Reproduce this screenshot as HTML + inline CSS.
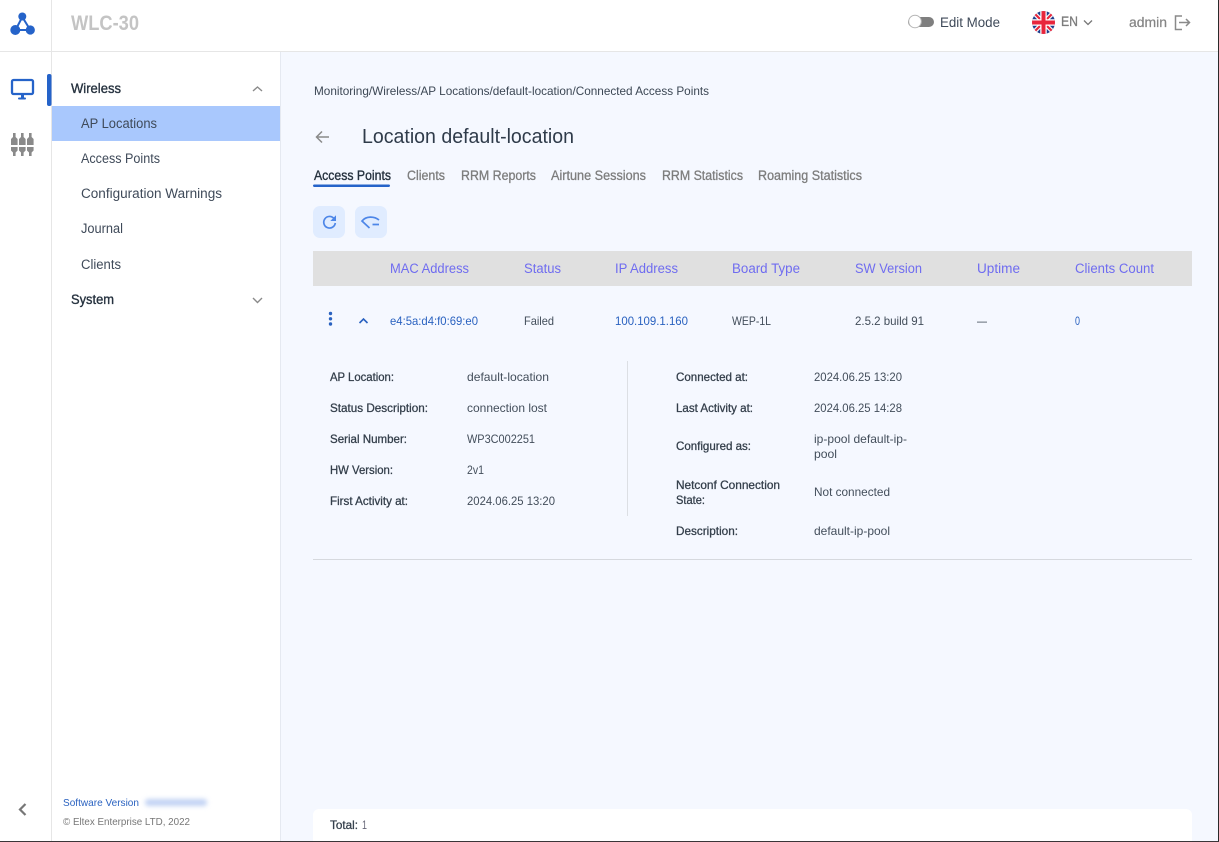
<!DOCTYPE html>
<html lang="en"><head><meta charset="utf-8"><title>WLC-30</title>
<style>
html,body{margin:0;padding:0;width:1219px;height:842px;overflow:hidden;background:#f5f8ff}
svg{display:block}
text{font-family:"Liberation Sans",sans-serif;white-space:pre}
.n{font-size:13.5px;fill:#3f4a59}
.b{font-size:13.5px;fill:#26323f;stroke:#26323f;stroke-width:.35}
.t{font-size:13.5px;fill:#7d7d7d;stroke:#7d7d7d;stroke-width:.3}
.h{font-size:13.5px;fill:#6f6cf0}
.c{font-size:12px;fill:#434e5b}
.l{font-size:12px;fill:#333e4a;stroke:#333e4a;stroke-width:.28}
.a{font-size:12px;fill:#2a62c0}
</style></head><body>
<svg width="1219" height="842" viewBox="0 0 1219 842" xmlns="http://www.w3.org/2000/svg">
<defs><filter id="bl" x="-20%" y="-100%" width="140%" height="300%"><feGaussianBlur stdDeviation="2.4"/></filter>
<clipPath id="fc"><circle cx="1043.5" cy="22.5" r="11.5"/></clipPath></defs>
<rect width="1219" height="842" fill="#f5f8ff"/>
<rect width="1219" height="51" fill="#fff"/>
<rect y="51" width="1219" height="1" fill="#e6e6e6"/>
<rect y="52" width="280" height="790" fill="#fff"/>
<rect x="51" width="1" height="842" fill="#e6e6e6"/>
<rect x="280" y="52" width="1" height="790" fill="#e5e9f1"/>

<!-- logo -->
<path d="M22.300 17 15.500 30H30.300Z" stroke="#2563c9" stroke-width="2" fill="none"/>
<circle cx="22.300" cy="16.500" r="4" fill="#2563c9"/><circle cx="15.300" cy="30" r="5" fill="#2563c9"/><circle cx="30.300" cy="30" r="4.600" fill="#2563c9"/>
<text x="71" y="30" style="font-size:21px;font-weight:700;fill:#c4c4c4" textLength="68" lengthAdjust="spacingAndGlyphs">WLC-30</text>

<!-- top right -->
<rect x="908" y="17" width="26" height="10" rx="5" fill="#7f7f7f"/>
<circle cx="915" cy="21.500" r="6.300" fill="#fff" stroke="#b5b5b5" stroke-width="1"/>
<text x="940" y="27" class="n" textLength="60" lengthAdjust="spacingAndGlyphs">Edit Mode</text>
<g clip-path="url(#fc)"><rect x="1032" y="11" width="23" height="23" fill="#1f3f8c"/>
<path d="M1032 11 1055 34M1055 11 1032 34" stroke="#fff" stroke-width="4.500"/>
<path d="M1032 11 1055 34M1055 11 1032 34" stroke="#e8263c" stroke-width="2.200"/>
<path d="M1043.500 11V34M1032 22.500H1055" stroke="#fff" stroke-width="6.500"/>
<path d="M1043.500 11V34M1032 22.500H1055" stroke="#e8263c" stroke-width="4"/></g>
<text x="1061" y="26" class="t" style="font-size:14px" textLength="17" lengthAdjust="spacingAndGlyphs">EN</text>
<path d="M1084 20.500 1088 24.500 1092 20.500" fill="none" stroke="#777" stroke-width="1.300"/>
<text x="1129" y="27" style="font-size:13.500px;fill:#858585;stroke:#858585;stroke-width:.2" textLength="38" lengthAdjust="spacingAndGlyphs">admin</text>
<path d="M1182 16H1175.500V29.500H1182M1179 22.500H1189.500M1186 19 1189.500 22.500 1186 26" fill="none" stroke="#8a8a8a" stroke-width="1.500"/>

<!-- rail -->
<rect x="12" y="80" width="21" height="14" rx="1.500" fill="none" stroke="#2563c9" stroke-width="2.300"/>
<rect x="21" y="95" width="3" height="3" fill="#2563c9"/>
<rect x="18" y="97.500" width="8" height="2" rx="1" fill="#2563c9"/>
<rect x="47" y="74" width="4.500" height="32" rx="2" fill="#2563c9"/>
<g fill="#8a8a8a">
<path d="M13 133h2.600v4l2 2v6h-6.600v-6l2-2zM11 147h6.600v3.500l-2 2v3.500h-2.600v-3.500l-2-2z"/>
<path d="M21 133h2.600v4l2 2v6h-6.600v-6l2-2zM19 147h6.600v3.500l-2 2v3.500h-2.600v-3.500l-2-2z"/>
<path d="M29 133h2.600v4l2 2v6h-6.600v-6l2-2zM27 147h6.600v3.500l-2 2v3.500h-2.600v-3.500l-2-2z"/>
</g>
<path d="M25.500 804 20 809.500 25.500 815" fill="none" stroke="#777" stroke-width="2.200"/>

<!-- nav -->
<text x="71" y="93" class="b" textLength="50" lengthAdjust="spacingAndGlyphs">Wireless</text>
<path d="M253 91 257.500 87 262 91" fill="none" stroke="#8a8a8a" stroke-width="1.400"/>
<rect x="52" y="106" width="228" height="35" fill="#a9c8fd"/>
<text x="81" y="128" class="n" textLength="76" lengthAdjust="spacingAndGlyphs">AP Locations</text>
<text x="81" y="163" class="n" textLength="79" lengthAdjust="spacingAndGlyphs">Access Points</text>
<text x="81" y="198" class="n" textLength="141" lengthAdjust="spacingAndGlyphs">Configuration Warnings</text>
<text x="81" y="233" class="n" textLength="42" lengthAdjust="spacingAndGlyphs">Journal</text>
<text x="81" y="269" class="n" textLength="40" lengthAdjust="spacingAndGlyphs">Clients</text>
<text x="71" y="304" class="b" textLength="43" lengthAdjust="spacingAndGlyphs">System</text>
<path d="M253 298 257.500 302.500 262 298" fill="none" stroke="#8a8a8a" stroke-width="1.400"/>
<text x="63" y="806" style="font-size:10.500px;fill:#2a62c0" textLength="76" lengthAdjust="spacingAndGlyphs">Software Version</text>
<rect x="145" y="799" width="62" height="7" rx="3" fill="#c2d3f4" filter="url(#bl)"/>
<text x="63" y="825" style="font-size:10px;fill:#777" textLength="127" lengthAdjust="spacingAndGlyphs">© Eltex Enterprise LTD, 2022</text>

<!-- main head -->
<text x="314" y="95" style="font-size:12px;fill:#3c4754" textLength="395" lengthAdjust="spacingAndGlyphs">Monitoring/Wireless/AP Locations/default-location/Connected Access Points</text>
<path d="M329 137H317M322 131.500 316.500 137 322 142.500" fill="none" stroke="#8a8a8a" stroke-width="1.500"/>
<text x="362" y="143" style="font-size:20px;fill:#2f3b4a" textLength="212" lengthAdjust="spacingAndGlyphs">Location default-location</text>
<text x="314" y="180" class="b" textLength="77" lengthAdjust="spacingAndGlyphs">Access Points</text>
<rect x="313" y="184.500" width="77" height="2.500" rx="1.200" fill="#2563c9"/>
<text x="407" y="180" class="t" textLength="38" lengthAdjust="spacingAndGlyphs">Clients</text>
<text x="461" y="180" class="t" textLength="75" lengthAdjust="spacingAndGlyphs">RRM Reports</text>
<text x="551" y="180" class="t" textLength="95" lengthAdjust="spacingAndGlyphs">Airtune Sessions</text>
<text x="662" y="180" class="t" textLength="81" lengthAdjust="spacingAndGlyphs">RRM Statistics</text>
<text x="758" y="180" class="t" textLength="104" lengthAdjust="spacingAndGlyphs">Roaming Statistics</text>

<!-- buttons -->
<rect x="313" y="206" width="32" height="32" rx="7" fill="#e0ecff"/>
<rect x="355" y="206" width="32" height="32" rx="7" fill="#e0ecff"/>
<path d="M334 218.500A5.800 5.800 0 1 0 335.300 223" fill="none" stroke="#4d86e8" stroke-width="1.700"/>
<path d="M331.500 220.500H335.500V216.500Z" fill="#4d86e8" stroke="#4d86e8"/>
<path d="M379 220C374 216 366 216 362 221L369.500 228M372.500 224.500H379" fill="none" stroke="#4d86e8" stroke-width="1.700"/>

<!-- table -->
<rect x="313" y="251" width="879" height="35" fill="#e0e0e0"/>
<text x="390" y="273" class="h" textLength="79" lengthAdjust="spacingAndGlyphs">MAC Address</text>
<text x="524" y="273" class="h" textLength="37" lengthAdjust="spacingAndGlyphs">Status</text>
<text x="615" y="273" class="h" textLength="63" lengthAdjust="spacingAndGlyphs">IP Address</text>
<text x="732" y="273" class="h" textLength="68" lengthAdjust="spacingAndGlyphs">Board Type</text>
<text x="855" y="273" class="h" textLength="67" lengthAdjust="spacingAndGlyphs">SW Version</text>
<text x="977" y="273" class="h" textLength="43" lengthAdjust="spacingAndGlyphs">Uptime</text>
<text x="1075" y="273" class="h" textLength="79" lengthAdjust="spacingAndGlyphs">Clients Count</text>

<g fill="#2a62c0"><circle cx="330.500" cy="313.500" r="1.700"/><circle cx="330.500" cy="318.800" r="1.700"/><circle cx="330.500" cy="324" r="1.700"/></g>
<path d="M359.500 323 363.500 319 367.500 323" fill="none" stroke="#2a62c0" stroke-width="1.600"/>
<text x="390" y="325" class="a" textLength="88" lengthAdjust="spacingAndGlyphs">e4:5a:d4:f0:69:e0</text>
<text x="524" y="325" class="c" textLength="30" lengthAdjust="spacingAndGlyphs">Failed</text>
<text x="615" y="325" class="a" textLength="73" lengthAdjust="spacingAndGlyphs">100.109.1.160</text>
<text x="732" y="325" class="c" textLength="39" lengthAdjust="spacingAndGlyphs">WEP-1L</text>
<text x="855" y="325" class="c" textLength="69" lengthAdjust="spacingAndGlyphs">2.5.2 build 91</text>
<text x="977" y="325" class="c" textLength="10" lengthAdjust="spacingAndGlyphs">—</text>
<text x="1075" y="325" class="a" textLength="5" lengthAdjust="spacingAndGlyphs">0</text>

<!-- details left -->
<text x="330" y="381" class="l" textLength="64" lengthAdjust="spacingAndGlyphs">AP Location:</text>
<text x="330" y="412" class="l" textLength="98" lengthAdjust="spacingAndGlyphs">Status Description:</text>
<text x="330" y="443" class="l" textLength="77" lengthAdjust="spacingAndGlyphs">Serial Number:</text>
<text x="330" y="474" class="l" textLength="63" lengthAdjust="spacingAndGlyphs">HW Version:</text>
<text x="330" y="505" class="l" textLength="78" lengthAdjust="spacingAndGlyphs">First Activity at:</text>
<text x="467" y="381" class="c" textLength="82" lengthAdjust="spacingAndGlyphs">default-location</text>
<text x="467" y="412" class="c" textLength="80" lengthAdjust="spacingAndGlyphs">connection lost</text>
<text x="467" y="443" class="c" textLength="68" lengthAdjust="spacingAndGlyphs">WP3C002251</text>
<text x="467" y="474" class="c" textLength="17" lengthAdjust="spacingAndGlyphs">2v1</text>
<text x="467" y="505" class="c" textLength="88" lengthAdjust="spacingAndGlyphs">2024.06.25 13:20</text>
<rect x="627" y="361" width="1" height="155" fill="#dcdfe4"/>

<!-- details right -->
<text x="676" y="381" class="l" textLength="72" lengthAdjust="spacingAndGlyphs">Connected at:</text>
<text x="676" y="412" class="l" textLength="77" lengthAdjust="spacingAndGlyphs">Last Activity at:</text>
<text x="676" y="450" class="l" textLength="75" lengthAdjust="spacingAndGlyphs">Configured as:</text>
<text x="676" y="489" class="l" textLength="104" lengthAdjust="spacingAndGlyphs">Netconf Connection</text>
<text x="676" y="504" class="l" textLength="29" lengthAdjust="spacingAndGlyphs">State:</text>
<text x="676" y="535" class="l" textLength="62" lengthAdjust="spacingAndGlyphs">Description:</text>
<text x="814" y="381" class="c" textLength="88" lengthAdjust="spacingAndGlyphs">2024.06.25 13:20</text>
<text x="814" y="412" class="c" textLength="88" lengthAdjust="spacingAndGlyphs">2024.06.25 14:28</text>
<text x="814" y="443" class="c" textLength="93" lengthAdjust="spacingAndGlyphs">ip-pool default-ip-</text>
<text x="814" y="458" class="c" textLength="23" lengthAdjust="spacingAndGlyphs">pool</text>
<text x="814" y="496" class="c" textLength="76" lengthAdjust="spacingAndGlyphs">Not connected</text>
<text x="814" y="535" class="c" textLength="76" lengthAdjust="spacingAndGlyphs">default-ip-pool</text>
<rect x="313" y="559" width="879" height="1" fill="#d6d9de"/>

<!-- footer -->
<path d="M313 842V815a6 6 0 0 1 6-6H1186a6 6 0 0 1 6 6V842Z" fill="#fff"/>
<text x="330" y="829" class="l" textLength="28" lengthAdjust="spacingAndGlyphs">Total:</text>
<text x="362" y="829" style="font-size:12px;fill:#667" textLength="5" lengthAdjust="spacingAndGlyphs">1</text>

<!-- capture edges -->
<rect x="1218" width="1" height="842" fill="#2a2a2a"/>
<rect y="841" width="1219" height="1" fill="#3a3538"/>
</svg>
</body></html>
